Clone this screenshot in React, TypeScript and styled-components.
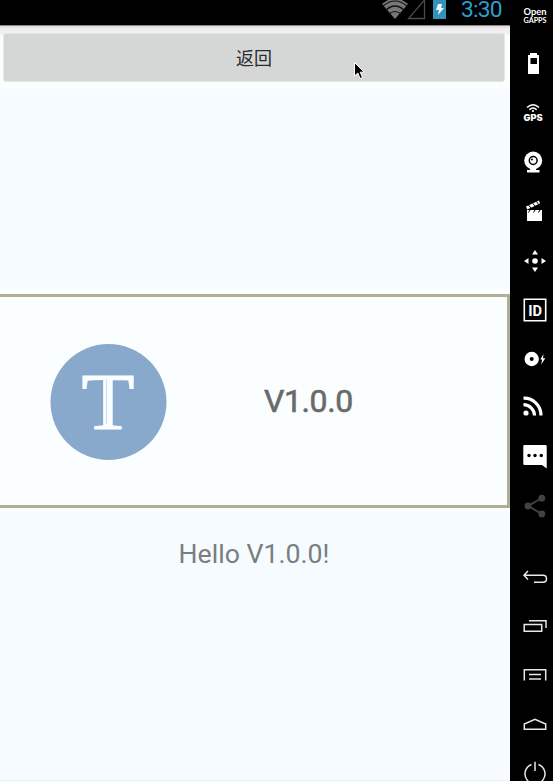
import React from 'react';
import styled, { createGlobalStyle } from 'styled-components';

const GlobalStyle = createGlobalStyle`
  body { margin: 0; background: #000; overflow: hidden; }
`;

const Emulator = styled.div`
  display: flex;
  width: 553px;
  height: 781px;
  overflow: hidden;
  background: #000;
`;

const Screen = styled.main`
  position: relative;
  display: flex;
  flex-direction: column;
  width: 510px;
  height: 781px;
  box-sizing: border-box;
  background: #f6fbff;
  border-bottom: 1px solid #e9eef0;
`;

const StatusBar = styled.header`
  display: flex;
  justify-content: flex-end;
  height: 25px;
  flex: none;
  background: #000;
`;

const StatusIcons = styled.svg`
  display: block;
  width: 68px;
  height: 25px;
`;

const Clock = styled.time`
  width: 49px;
  padding-left: 11px;
  font: 400 22.8px/19px Roboto, sans-serif;
  letter-spacing: -0.8px;
  color: #2c9fd0;
  white-space: nowrap;
`;

const ActionArea = styled.div`
  flex: none;
  height: 64px;
  box-sizing: border-box;
  padding: 8px 5px 0 3px;
  background: linear-gradient(#8c8888 0 1px, #dedede 1px 2px, #ececec 3px, #f2f2f2 10px, #fafeff 10px);
`;

const BackButton = styled.button`
  display: flex;
  align-items: center;
  justify-content: center;
  width: 502px;
  height: 49px;
  padding: 0 0 1px;
  border: 1px solid #e4e7e6;
  border-radius: 3px;
  background: #d5d7d6;
  color: #2b2b2b;
  font: 400 18px/24px "Noto Sans CJK SC", sans-serif;
`;

const CardArea = styled.section`
  flex: none;
  margin-top: 198px;
  padding: 7px 0 4px;
  background: #fafeff;
`;

const Card = styled.div`
  display: flex;
  align-items: center;
  height: 214px;
  box-sizing: border-box;
  border: 3px solid #b0ae93;
  border-left: 0;
  background: #fafeff;
`;

const Logo = styled.svg`
  display: block;
  width: 118px;
  height: 118px;
  margin: 2px 0 0 49px;
`;

const Version = styled.span`
  margin: -1px 0 0 97px;
  font: 400 32px/40px Roboto, sans-serif;
  letter-spacing: -0.4px;
  -webkit-text-stroke: 0.6px #6a6a6a;
  color: #6a6a6a;
`;

const Greeting = styled.p`
  margin: 25px 0 0;
  padding-right: 2px;
  text-align: center;
  font: 400 26.7px/34px Roboto, sans-serif;
  color: #7b7e7e;
`;

const Pointer = styled.svg`
  position: absolute;
  left: 353px;
  top: 61px;
  width: 12px;
  height: 19px;
`;

const Sidebar = styled.aside`
  width: 43px;
  height: 781px;
  overflow: hidden;
  background: #000;
`;

const ToolGroup = styled.div`
  margin-top: -9px;
`;

const NavGroup = styled.nav`
  margin-top: 22px;
`;

const ToolIcon = styled.svg<{ $dim?: boolean }>`
  display: block;
  width: 43px;
  height: 49px;
  color: ${(p) => (p.$dim ? '#424242' : '#fff')};
  fill: currentColor;
`;

const NavIcon = styled(ToolIcon)`
  fill: none;
  stroke: #e8e8e8;
  stroke-width: 1.5;
`;

const IconText = styled.text<{ $size: number; $weight?: number; $family?: string }>`
  font-family: ${(p) => p.$family ?? 'Lato'}, sans-serif;
  font-size: ${(p) => p.$size}px;
  font-weight: ${(p) => p.$weight ?? 700};
`;

const LogoLetter = styled.text`
  font-family: "Liberation Serif", serif;
  font-size: 80px;
  fill: #fafdff;
  stroke: #fafdff;
  stroke-width: 1.2px;
`;

export default function App() {
  return (
    <Emulator>
      <GlobalStyle />
      <Screen>
        <StatusBar>
          <StatusIcons viewBox="0 0 68 25">
            <path d="M0 4Q13-7 26 4L13 19Z" fill="#777" />
            <g fill="none" stroke="#111" strokeWidth="1.2">
              <path d="M1 6Q13-4 25 6" />
              <path d="M4 10Q13 2 22 10" />
              <path d="M7 14Q13 9 19 14" />
            </g>
            <path d="M26.500 18.500H42.500V0Z" fill="none" stroke="#4a4a4a" strokeWidth="1.300" />
            <path d="M51 0H64V19H51Z" fill="#3293b9" />
            <path d="M56 4H60L59 8H62L56 15L57 10H54Z" fill="#f4fbff" />
          </StatusIcons>
          <Clock>3:30</Clock>
        </StatusBar>
        <ActionArea>
          <BackButton>返回</BackButton>
        </ActionArea>
        <CardArea>
          <Card>
            <Logo viewBox="0 0 118 118">
              <circle cx="59.500" cy="59" r="58" fill="#88a9cb" />
              <LogoLetter x="32.500" y="85.500" textLength="53" lengthAdjust="spacingAndGlyphs">T</LogoLetter>
              <path d="M57.500 36V81" stroke="#d3dfec" strokeWidth="1.200" />
            </Logo>
            <Version>V1.0.0</Version>
          </Card>
        </CardArea>
        <Greeting>Hello V1.0.0!</Greeting>
        <Pointer viewBox="0 0 12 19">
          <path d="M1.500 1.500V15L4.800 12L7 17.500L9.500 16.500L7.200 11.200H11.200Z" fill="#000" stroke="#fff" strokeWidth="1" />
        </Pointer>
      </Screen>
      <Sidebar>
        <ToolGroup>
          <ToolIcon viewBox="0 0 43 49">
            <IconText x="13.500" y="23.500" $size={10} $weight={700} textLength="23" lengthAdjust="spacingAndGlyphs">Open</IconText>
            <IconText x="13.500" y="32" $size={7.500} $weight={700} textLength="23" lengthAdjust="spacingAndGlyphs">GAPPS</IconText>
          </ToolIcon>
          <ToolIcon viewBox="0 0 43 49">
            <path fillRule="evenodd" d="M20 13H27V15H29V34H18V15H20ZM20.500 18V24H27V18Z" />
          </ToolIcon>
          <ToolIcon viewBox="0 0 43 49">
            <g fill="none" stroke="currentColor" strokeWidth="1.500">
              <path d="M17 18.500Q23 13 29 18.500" />
              <path d="M19.300 20.800Q23 17.300 26.700 20.800" />
            </g>
            <circle cx="23" cy="22" r="1.100" />
            <IconText x="13.500" y="31.800" $size={8.400} $weight={900} $family="Inter" textLength="19" lengthAdjust="spacingAndGlyphs">GPS</IconText>
          </ToolIcon>
          <ToolIcon viewBox="0 0 43 49">
            <circle cx="23.200" cy="22.500" r="9" />
            <circle cx="23.200" cy="22.500" r="3.900" fill="none" stroke="#000" strokeWidth="1.500" />
            <circle cx="22" cy="21.500" r="1" fill="#000" />
            <path d="M20 30H26V32H29.500V34.500H17V32H20Z" />
          </ToolIcon>
          <ToolIcon viewBox="0 0 43 49">
            <path d="M17 23H32V34H17Z" />
            <path d="M16 19.500L29 13.500L30 16.500L17.200 22.500Z" />
            <path d="M18.500 18L21 21M22.500 16L25 19M26.500 14.500L28.500 17.500M20 23L18.500 25.500M25 23L23.500 25.500M30 23L28.500 25.500" stroke="#000" strokeWidth="1" />
          </ToolIcon>
          <ToolIcon viewBox="0 0 43 49">
            <circle cx="25" cy="25" r="2.800" />
            <path d="M25 14L28 18.500H22ZM25 36L22 31.500H28ZM14 25L18.500 22V28ZM36 25L31.500 22V28Z" />
          </ToolIcon>
          <ToolIcon viewBox="0 0 43 49">
            <path d="M14.300 14.300H35.700V35.700H14.300Z" fill="none" stroke="currentColor" strokeWidth="1.600" />
            <IconText x="18.200" y="30.500" $size={15.500} $weight={700} $family="Roboto" textLength="13.800" lengthAdjust="spacingAndGlyphs">ID</IconText>
          </ToolIcon>
          <ToolIcon viewBox="0 0 43 49">
            <circle cx="21.700" cy="25" r="4.600" fill="none" stroke="currentColor" strokeWidth="5.200" />
            <path d="M33.500 20L30.300 25.500H32.200L31.200 30.500L35.300 24.300H33Z" />
          </ToolIcon>
          <ToolIcon viewBox="0 0 43 49">
            <g fill="none" stroke="currentColor" strokeWidth="3.200">
              <path d="M13.500 15.200A17 17 0 0 1 31 32.500" />
              <path d="M13.500 21.700A11 11 0 0 1 24.500 32.500" />
            </g>
            <circle cx="16" cy="30" r="2.600" />
          </ToolIcon>
          <ToolIcon viewBox="0 0 43 49">
            <path d="M14.500 13H35.500Q36.700 13 36.700 14.200V36.500L32 33H14.500Q13.300 33 13.300 31.800V14.200Q13.300 13 14.500 13Z" />
            <g fill="#000">
              <circle cx="19" cy="23.500" r="1.700" />
              <circle cx="25" cy="23.500" r="1.700" />
              <circle cx="31.300" cy="23.500" r="1.700" />
            </g>
          </ToolIcon>
          <ToolIcon $dim viewBox="0 0 43 49">
            <path d="M32 17L18 25L32 33" fill="none" stroke="currentColor" strokeWidth="2" />
            <circle cx="31.800" cy="17.200" r="3.400" />
            <circle cx="18" cy="25" r="3.400" />
            <circle cx="31.800" cy="33" r="3.400" />
          </ToolIcon>
        </ToolGroup>
        <NavGroup>
          <NavIcon viewBox="0 0 43 49">
            <path d="M18 19L14 23.300L18 27.500M14 23.300H33Q36.500 23.300 36.500 26.800T33 30.300H24" />
          </NavIcon>
          <NavIcon viewBox="0 0 43 49">
            <path d="M14.200 23.500H31.700V30.200H14.200ZM19 19.700H36V27" />
          </NavIcon>
          <NavIcon viewBox="0 0 43 49">
            <path d="M14.300 30.500V19.700H35.700V30.500M19 24.500H31M19 29H31" />
          </NavIcon>
          <NavIcon viewBox="0 0 43 49">
            <path d="M14.300 30.300V25L25 20.200L35.700 25V30.300Z" />
          </NavIcon>
          <NavIcon viewBox="0 0 43 49">
            <path d="M21.500 16.500A10 10 0 1 0 28.500 16.500M25 13.800V23" />
          </NavIcon>
        </NavGroup>
      </Sidebar>
    </Emulator>
  );
}
